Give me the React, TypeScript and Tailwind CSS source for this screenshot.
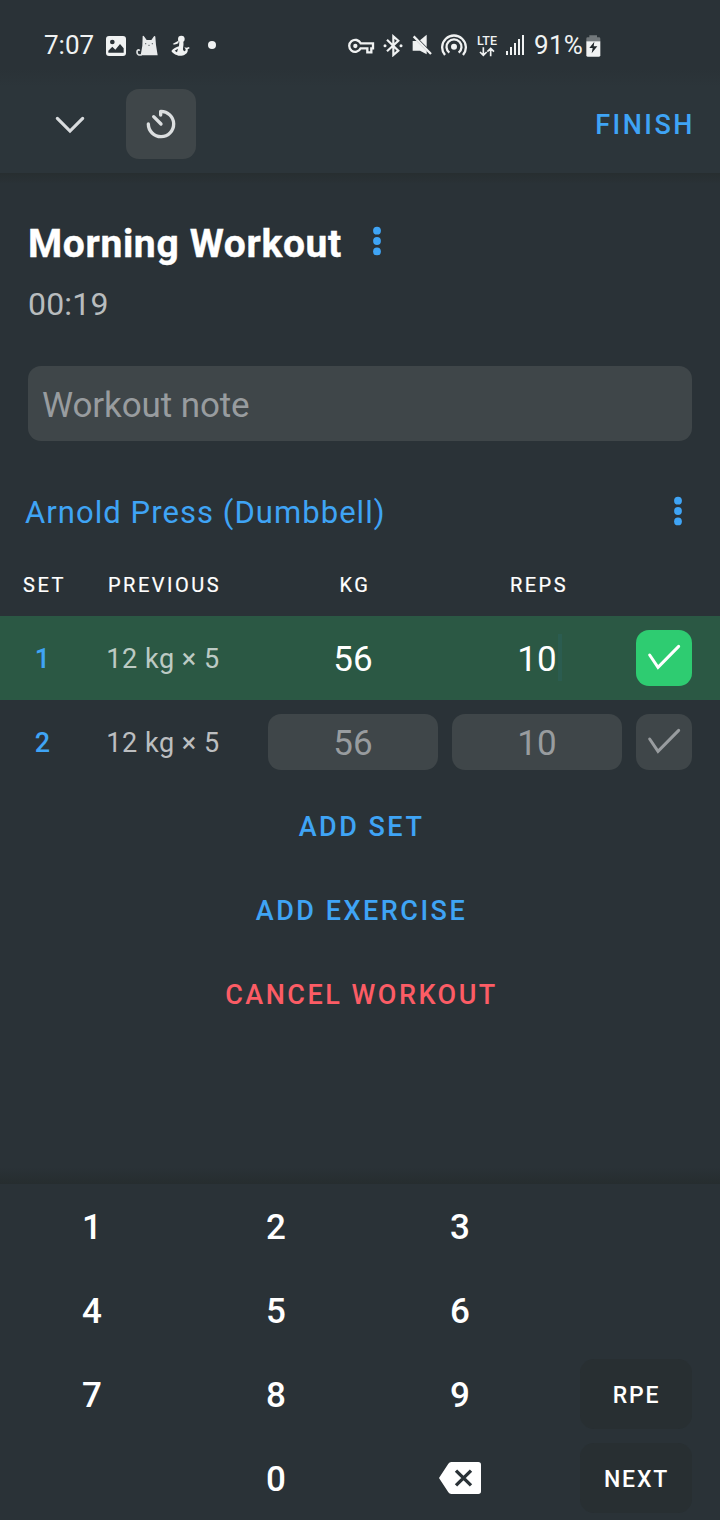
import { useState } from "react";
import type { ReactNode } from "react";

function PhotoIcon() {
  return (
    <svg className="block h-5 w-5" viewBox="0 0 60 60">
      <rect width="60" height="60" rx="9" fill="#f0f2f2" />
      <circle cx="19" cy="18" r="7" fill="#2a3237" />
      <path d="M7 50V44L19 32L28 41L42 24L53 37V50Z" fill="#2a3237" />
    </svg>
  );
}

function CatIcon() {
  return (
    <svg className="block h-[22px] w-[22px]" viewBox="0 0 66 66">
      <path d="M14 61L19 32L20 3Q22 1 25 5L32 15H46L54 4Q57 1 58 5L60 30L65 61Z" fill="#e8eaeb" />
      <path d="M17 59C8 62 3 58 3 51C3 45 8 43 11 47" fill="none" stroke="#e0e3e4" strokeWidth="5" />
      <circle cx="29" cy="26" r="2" fill="#5b6266" />
      <circle cx="49" cy="26" r="2" fill="#5b6266" />
      <path d="M36 30Q39 34 42 30" fill="none" stroke="#5b6266" strokeWidth="2" />
    </svg>
  );
}

function FigureIcon() {
  return (
    <svg className="block h-[22px] w-5" viewBox="0 0 60 66">
      <circle cx="34" cy="12" r="10" fill="#f0f2f2" />
      <path d="M27 15C24 20 14 22 8 27C14 30 20 28 25 25Z" fill="#f0f2f2" />
      <path d="M28 20L27 34C18 36 10 41 4 48C8 55 14 58 20 60C28 64 38 63 44 59C53 55 54 48 53 43L59 40L57 36L50 38L43 37L47 43C47 49 43 51 40 46C37 40 42 34 40 20Z" fill="#f0f2f2" />
      <path d="M14 47L24 41L21 52Z" fill="#2a3237" />
    </svg>
  );
}

function KeyIcon() {
  return (
    <svg className="block h-[18px] w-[27px]" viewBox="24 52 81 54" fill="none" stroke="#f0f2f2" strokeWidth="7">
      <path d="M62 71H99V86H94V98H82V86H62A18 18 0 1 1 62 71Z" />
      <circle cx="46" cy="79" r="6.5" fill="#f0f2f2" stroke="none" />
    </svg>
  );
}

function BluetoothIcon() {
  return (
    <svg className="block h-[23px] w-5" viewBox="128 42 60 69" fill="none" stroke="#f0f2f2" strokeWidth="6.5">
      <path d="M140 59L174 92L159 105V49L174 62L140 94" />
      <circle cx="134" cy="77" r="4.5" fill="#f0f2f2" stroke="none" />
      <circle cx="182" cy="77" r="4.5" fill="#f0f2f2" stroke="none" />
    </svg>
  );
}

function MuteIcon() {
  return (
    <svg className="block h-[22px] w-5" viewBox="216 43 60 66" fill="#f0f2f2">
      <path d="M260 45V82L240 62Z" />
      <path d="M218 64H230L260 94V104L240 93H218Z" />
      <path d="M221 50L273 103" stroke="#f0f2f2" strokeWidth="7" />
    </svg>
  );
}

function HotspotIcon() {
  return (
    <svg className="block h-[23px] w-[26px]" viewBox="303 42 78 69" fill="none" stroke="#f0f2f2" strokeWidth="7">
      <circle cx="342" cy="80" r="9" fill="#f0f2f2" stroke="none" />
      <path d="M328 98A22.5 22.5 0 1 1 356 98" />
      <path d="M315 105A35.5 35.5 0 1 1 369 105" />
    </svg>
  );
}

function LteIcon() {
  return (
    <div className="flex w-[22px] flex-col items-center pt-0.5">
      <span className="text-[12.5px] leading-[11px] font-medium">LTE</span>
      <svg className="mt-px block h-[10px] w-4" viewBox="0 0 48 30" fill="none" stroke="#f0f2f2" strokeWidth="5">
        <path d="M13 1V25M3 15L13 25L23 15M35 28V4M25 14L35 4L45 14" />
      </svg>
    </div>
  );
}

function SignalIcon() {
  return (
    <svg className="block h-5 w-[18px]" viewBox="108 45 54 60" fill="#f0f2f2">
      <path d="M108 93h6v12h-6zM120 81h6v24h-6zM132 69h6v36h-6zM144 57h6v48h-6zM156 45h6v60h-6z" />
    </svg>
  );
}

function BatteryIcon() {
  return (
    <svg className="block h-[22px] w-[15px]" viewBox="350 44 45 66">
      <path d="M351 63V55Q351 51 355 51H360V45H383V51H389Q393 51 393 55V63Z" fill="#72787b" />
      <path d="M351 63H393V105Q393 109 389 109H355Q351 109 351 105Z" fill="#f0f2f2" />
      <path d="M375 64L360 83H370L367 99L384 78H373Z" fill="#20272b" />
    </svg>
  );
}

function TimerIcon() {
  return (
    <svg className="block h-[30px] w-[30px]" viewBox="318 87 90 90" fill="none" stroke="#dcdfe0" strokeWidth="10" strokeLinecap="round" strokeLinejoin="round">
      <path d="M362 105V94A38 38 0 1 1 325 132M341 110L363 132" />
    </svg>
  );
}

function CheckIcon({ className }: { className: string }) {
  return (
    <svg className={`block h-14 w-14 ${className}`} viewBox="408 90 168 168" fill="none" stroke="currentColor" strokeWidth="9" strokeLinecap="round">
      <path d="M449 165L474 202L536 139" />
    </svg>
  );
}

function MoreIcon() {
  return (
    <svg className="block h-[30px] w-[10px]" viewBox="0 0 10 30" fill="#3fa4f5">
      <circle cx="5" cy="4.7" r="3.9" />
      <circle cx="5" cy="15" r="3.9" />
      <circle cx="5" cy="25.4" r="3.9" />
    </svg>
  );
}

function BackspaceIcon() {
  return (
    <svg className="block h-8 w-[42px]" viewBox="117 366 126 96">
      <path d="M117 414L145 371Q148 366 154 366H235Q243 366 243 374V454Q243 462 235 462H154Q148 462 145 457Z" fill="white" />
      <path d="M168 392L213 436M213 392L168 436" stroke="#2a3237" strokeWidth="10" />
    </svg>
  );
}

function Action({ children, danger = false }: { children: ReactNode; danger?: boolean }) {
  return (
    <button className={`flex h-[84px] w-full items-center justify-center pt-px pl-[3px] text-[27px] leading-8 font-medium tracking-[2.5px] ${danger ? "text-[#fc5c65]" : "text-[#3fa4f5]"}`}>
      {children}
    </button>
  );
}

function SetRow({ index, done }: { index: number; done: boolean }) {
  return (
    <div className={`flex h-[84px] items-center pr-7 ${done ? "bg-[#2b5844]" : ""}`}>
      <span className="w-[85px] pt-0.5 text-center text-[27px] font-medium text-[#3fa4f5]">{index}</span>
      <span className="w-[155px] pt-0.5 pl-px text-center text-[27px] tracking-[0.55px] text-white/70">12 kg × 5</span>
      <div className={`ml-7 flex h-14 w-[170px] items-center justify-center rounded-[13px] pt-[5px] text-[35px] ${done ? "text-white" : "bg-[#3f4649] text-[#989c9f]"}`}>56</div>
      <div className={`ml-3.5 flex h-14 w-[170px] items-center justify-center rounded-[13px] pt-[5px] text-[35px] ${done ? "text-white" : "bg-[#3f4649] text-[#989c9f]"}`}>
        <span className="relative">
          10
          {done && <span className="absolute top-0 -right-[5px] h-[47px] w-1 bg-[#2b5c50]" />}
        </span>
      </div>
      <button className={`ml-3.5 h-14 w-14 rounded-[13px] ${done ? "bg-[#2ecc71]" : "bg-[#3f4649]"}`}>
        <CheckIcon className={done ? "text-white" : "text-[#989c9f]"} />
      </button>
    </div>
  );
}

function Key({ children }: { children?: ReactNode }) {
  return <button className="flex h-[84px] items-center justify-center pt-1 text-[35px] font-medium">{children}</button>;
}

function SideKey({ children }: { children: ReactNode }) {
  return (
    <button className="mt-[7px] ml-7 flex h-[70px] w-28 items-center justify-center rounded-[14px] bg-[#282f32] pt-1 pl-px text-[23px] font-medium tracking-[1.8px]">
      {children}
    </button>
  );
}

export default function App() {
  const [note, setNote] = useState("");
  return (
    <div className="flex h-[1520px] w-[720px] flex-col overflow-hidden bg-[#2a3237] font-['Roboto',sans-serif] text-white">
      <header className="h-[173px] shrink-0 bg-linear-to-b from-[#2a3237] from-40% to-[#2c353a] to-50%">
        <div className="flex h-[74px] items-center pt-4 pl-11 text-[26px] leading-[30px] text-[#f0f2f2]">
          <span className="w-[62px]">7:07</span>
          <div className="pt-0.5"><PhotoIcon /></div>
          <div className="ml-[10px] pt-px"><CatIcon /></div>
          <div className="ml-3 pt-0.5"><FigureIcon /></div>
          <div className="ml-[18px] h-2 w-2 rounded-full bg-[#f0f2f2]" />
          <div className="ml-[132px] flex items-center">
            <div className="pt-0.5"><KeyIcon /></div>
            <div className="ml-[8px]"><BluetoothIcon /></div>
            <div className="ml-[9px]"><MuteIcon /></div>
            <div className="ml-[9px]"><HotspotIcon /></div>
            <div className="ml-[9px]"><LteIcon /></div>
            <div className="ml-[8px]"><SignalIcon /></div>
            <span className="ml-[10px] w-[52px] tracking-[0.3px]">91%</span>
            <div className="pt-px"><BatteryIcon /></div>
          </div>
        </div>
        <div className="flex h-[99px] items-center pr-[25px] pl-[55px]">
          <svg className="mt-0.5 block h-[18px] w-[30px]" viewBox="45 108 90 54" fill="none" stroke="#d9dcde" strokeWidth="9.5" strokeLinecap="round">
            <path d="M52 115L90 153L128 115" />
          </svg>
          <button className="ml-[41px] flex h-[70px] w-[70px] items-center justify-center rounded-[13px] bg-[#3f4649]"><TimerIcon /></button>
          <button className="ml-auto pt-[3px] text-[27px] font-medium tracking-[2.5px] text-[#3fa4f5]">FINISH</button>
        </div>
      </header>
      <div className="h-[11px] shrink-0 bg-linear-to-b from-[#272e30] to-[#2a3237]" />

      <main className="flex h-[983px] shrink-0 flex-col">
        <div className="mt-[34px] flex h-[50px] items-center pl-7">
          <h1 className="w-[344px] pt-0.5 text-[39px] font-bold tracking-[0.65px] whitespace-nowrap [-webkit-text-stroke:0.4px_white]">Morning Workout</h1>
          <div className="mb-1"><MoreIcon /></div>
        </div>
        <div className="mt-4 flex h-10 items-center pl-7 text-[32px] tracking-[0.2px] text-[#b8bcbe]">00:19</div>
        <input
          className="mx-7 mt-[42px] h-[75px] shrink-0 rounded-[13px] bg-[#3f4649] px-3.5 pt-1 text-[35px] tracking-[-0.1px] text-white outline-none placeholder:text-[#989c9f]"
          placeholder="Workout note"
          value={note}
          onChange={(e) => setNote(e.target.value)}
        />
        <div className="mt-[45px] flex h-[50px] items-center justify-between pr-[37px] pl-[25px]">
          <h2 className="pt-[4px] text-[31px] tracking-[1.05px] text-[#3fa4f5]">Arnold Press (Dumbbell)</h2>
          <MoreIcon />
        </div>
        <div className="mt-[33px] flex h-[30px] items-center pt-px text-[20px] tracking-[2.5px] [-webkit-text-stroke:0.2px_white]">
          <span className="w-[85px] pl-[23px]">SET</span>
          <span className="w-[155px] pl-[23px]">PREVIOUS</span>
          <span className="ml-7 w-[170px] pl-1 text-center">KG</span>
          <span className="ml-3.5 w-[170px] pl-1 text-center">REPS</span>
        </div>
        <div className="mt-[17px]">
          <SetRow index={1} done />
          <SetRow index={2} done={false} />
        </div>
        <Action>ADD SET</Action>
        <Action>ADD EXERCISE</Action>
        <Action danger>CANCEL WORKOUT</Action>
      </main>

      <div className="h-[17px] shrink-0 bg-linear-to-b from-[#2a3237] to-[#262d2f]" />
      <section className="grid flex-1 grid-cols-[184px_184px_184px_168px] bg-[#2a3237]">
        <Key>1</Key><Key>2</Key><Key>3</Key><span />
        <Key>4</Key><Key>5</Key><Key>6</Key><span />
        <Key>7</Key><Key>8</Key><Key>9</Key><SideKey>RPE</SideKey>
        <Key /><Key>0</Key><button className="flex h-[84px] items-center justify-center"><BackspaceIcon /></button><SideKey>NEXT</SideKey>
      </section>
    </div>
  );
}
